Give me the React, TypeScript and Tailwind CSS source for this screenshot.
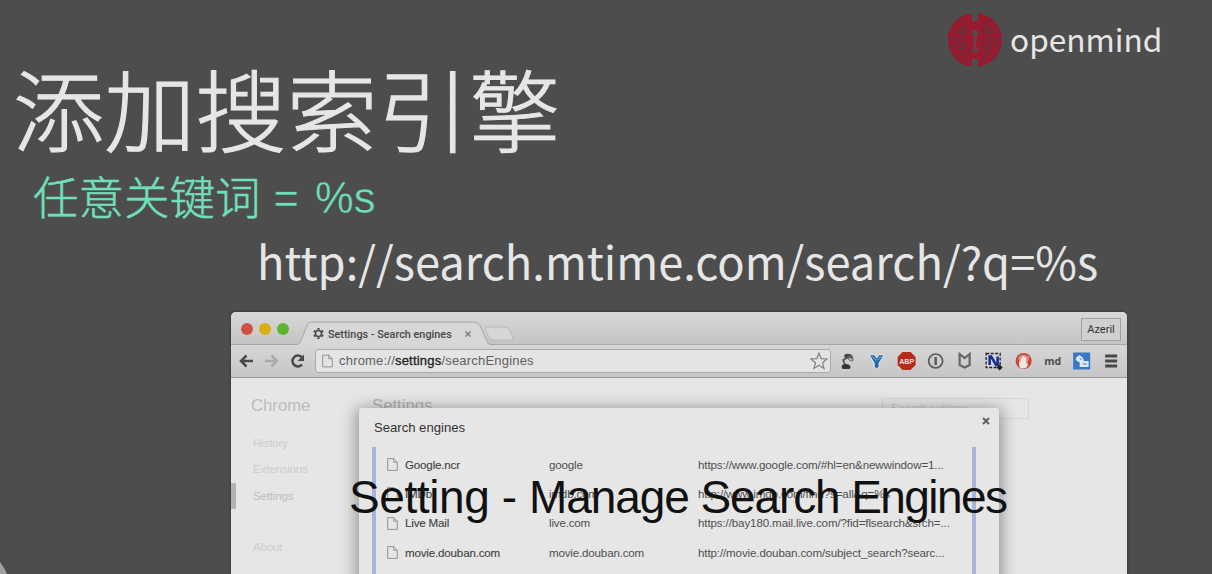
import React from "react";

const LATIN = "font-['Liberation_Sans',Arial,sans-serif]";
const CJK = "font-['Noto_Sans_CJK_SC',sans-serif]";

const engines = [
  { name: "Google.ncr", keyword: "google", url: "https://www.google.com/#hl=en&newwindow=1..." },
  { name: "IMDb", keyword: "imdb.com", url: "http://www.imdb.com/find?s=all&q=%s" },
  { name: "Live Mail", keyword: "live.com", url: "https://bay180.mail.live.com/?fid=flsearch&srch=..." },
  { name: "movie.douban.com", keyword: "movie.douban.com", url: "http://movie.douban.com/subject_search?searc..." },
];

function Brain() {
  return (
    <svg className="h-[54px] w-[54px] shrink-0" viewBox="0 0 54 54" fill="none">
      <path d="M24 .5C10 2 0 13 0 27s10 25 24 26.500V46h6v7.500C44 52 54 41 54 27S44 2 30 .5V8h-6z" fill="#971a2e" />
      <g stroke="#5f3340" strokeWidth="1.300" strokeLinecap="round">
        {[false, true].map((flip) => (
          <g key={String(flip)} transform={flip ? "translate(54 0) scale(-1 1)" : undefined}>
            <path d="M6 13c1 6 4 8 7 7 4-1 4-7 0-6-2 0-2 3 0 3M1 26h16M13 9c4 0 5 4 5 8 0 3-2 5-5 5" />
            <path d="M3 38c0-6 3-9 8-9 6 0 6 7 2 7-3 0-3-4 0-4M8 46c0-4 3-6 7-6 4-1 5-5 3-9M16 44c2 1 3 3 4 5" />
          </g>
        ))}
      </g>
      <circle cx="27" cy="20" r="3.200" fill="#574a4d" />
      <path d="M25 24h4l-1 8 2 6h-6l2-6z" fill="#6b3f48" />
      <path d="M23.500 38.500h7" stroke="#55484b" strokeWidth="2" />
    </svg>
  );
}

function FileIcon({ className }: { className: string }) {
  return (
    <svg className={className} viewBox="0 0 11 13" fill="none" stroke="#929292">
      <path d="M.7.600h6l3.600 3.600v8.200H.7zM6.700.600v3.600h3.600" />
    </svg>
  );
}

function ToolIcon({ children }: { children: React.ReactNode }) {
  return (
    <svg className="h-5 w-[29.300px] shrink-0" viewBox="-14.650 -10 29.300 20" fill="none">
      {children}
    </svg>
  );
}

function TabStrip() {
  return (
    <div className="relative flex h-[33px] items-start rounded-t-[5px] bg-linear-to-b from-[#d8d8d8] to-[#c4c4c4]">
      <svg className="absolute left-0 top-0 h-[33px] w-[896px]" viewBox="0 0 896 33" fill="none">
        <path d="M66 33q3-1 4-4l6-15q1-3.500 5-3.500h162q4 0 6 3.500l7 16q1 3 4 3z" fill="#d7d7d7" />
        <path d="M0 32.500h66q3-1 4-4l6-15q1-3.500 5-3.500h162q4 0 6 3.500l7 16q1 3 4 3h636" stroke="#a8a8a8" />
        <path d="M255 15h19q3 0 4 2l4 9q0 2-2 2h-18q-3 0-4-3l-4-8q0-2 1-2z" fill="#d6d6d6" stroke="#b9b9b9" />
      </svg>
      <div className="relative ml-[10px] mt-[11px] flex gap-[6px]">
        <span className="size-3 rounded-full bg-[#cf5145]" />
        <span className="size-3 rounded-full bg-[#dbae12]" />
        <span className="size-3 rounded-full bg-[#5cb632]" />
      </div>
      <svg className="relative ml-[24px] mt-[16px] size-[11px]" viewBox="-6 -6 12 12" fill="none" stroke="#505050">
        <circle r="3.300" strokeWidth="1.800" />
        <path d="M0-5.900V-4M0 5.900V4M-5-2.900l1.500.9M5 2.900 3.500 2M5-2.900 3.500-2M-5 2.900l1.500-.9" strokeWidth="2.600" />
      </svg>
      <span className="relative ml-[4px] mt-[15px] w-[137px] whitespace-nowrap font-['Roboto',sans-serif] text-[10.850px] font-medium leading-[16px] text-[#484848]">
        Settings - Search engines
      </span>
      <svg className="relative mt-[19px] size-[6px]" viewBox="0 0 6 6" stroke="#777" strokeWidth="1.300">
        <path d="m.500.500 5 5m0-5-5 5" />
      </svg>
      <div className="ml-auto mr-[6px] mt-[6px] flex h-[23px] w-[40px] items-center justify-center border border-[#a0a0a0] bg-[#d0d0d0] pt-px font-['Roboto',sans-serif] text-[11px] text-[#333]">
        Azeril
      </div>
    </div>
  );
}

function Toolbar() {
  return (
    <div className="flex h-[33px] items-center border-b border-[#989898] bg-linear-to-b from-[#d6d6d6] to-[#c6c6c6]">
      <svg className="ml-[8px] h-[18px] w-[70px] shrink-0" viewBox="0 0 70 18" fill="none" strokeWidth="2.500">
        <path d="M14 9H2m5.500-5.500L2 9l5.500 5.500" stroke="#494949" />
        <path d="M26 9h12m-5.500-5.500L38 9l-5.500 5.500" stroke="#aaa" />
        <path d="M63 12.500a5.400 5.400 0 1 1-.3-7.300" stroke="#494949" strokeWidth="2.500" />
        <path d="M65 2.500v6.500h-6.500z" fill="#494949" />
      </svg>
      <div className="ml-[6px] flex h-[24px] w-[516px] items-center rounded-[3px] border border-[#aaa] bg-[#e4e4e4]">
        <FileIcon className="ml-[6px] h-[14px] w-[11px]" />
        <span className="ml-[6px] whitespace-nowrap text-[13px] leading-4 tracking-[.2px] text-[#606060]">
          chrome://<span className="text-[#1d1d1d] [-webkit-text-stroke:.3px_#1d1d1d]">settings</span>/searchEngines
        </span>
        <svg className="ml-auto mr-[2px] size-[18px]" viewBox="0 0 18 18" fill="none" stroke="#808080">
          <path d="m9 1.200 2.200 5.400 5.800.4-4.500 3.700 1.500 5.700L9 13.300l-5 3.100 1.500-5.700L1 7l5.800-.4z" strokeWidth="1.200" />
        </svg>
      </div>
      <div className="ml-[2px] flex items-center">
        <ToolIcon>
          <path d="M-2.500 4-4.500-1l5-3" stroke="#505050" strokeWidth="1.700" />
          <ellipse cx="0" cy="-5" rx="3.500" ry="2.300" fill="#484848" />
          <path d="m-1-3 6 3q2-4-2-7z" fill="#606060" />
          <ellipse cx="3" cy="-1.800" rx="2.800" ry="1.300" transform="rotate(25 3 -1.800)" fill="#bdbdbd" stroke="#555" strokeWidth=".7" />
          <path d="M-6 6q0-3 4-3t5 3l-1 2h-7z" fill="#353535" />
        </ToolIcon>
        <ToolIcon>
          <path d="m-7.500-6 5-.5L0-3l3-3.500 4.500.5L2.500 2v4L0 8l-2.500-2V2z" fill="#2866a4" stroke="#e9eef2" strokeWidth="1" />
          <path d="m-5-5 4 4 3-1 3-3" stroke="#5aa3d8" strokeWidth="1.200" />
        </ToolIcon>
        <ToolIcon>
          <path d="M-4-9h8l5 5v8l-5 5h-8l-5-5v-8z" fill="#b52b1b" />
          <text textAnchor="middle" y="2.600" fill="#f2dfdc" fontFamily="Liberation Sans" fontWeight="700" fontSize="7.500" textLength="15" lengthAdjust="spacingAndGlyphs">ABP</text>
        </ToolIcon>
        <ToolIcon>
          <circle r="7" stroke="#5b5b5b" strokeWidth="1.700" />
          <path d="M0-4v8" stroke="#5b5b5b" strokeWidth="2.500" />
        </ToolIcon>
        <ToolIcon>
          <path d="M-5-7 0-3l5-4V4L0 6.500-5 4z" stroke="#666" strokeWidth="2.200" />
        </ToolIcon>
        <ToolIcon>
          <path d="M-7.500-7.500h14v14h-14z" fill="#ced2da" stroke="#222" strokeWidth="1.300" strokeDasharray="3 1.500" />
          <path d="M-4 4V-4.500h1.500L2.500 4H4v-8.500" stroke="#182c92" strokeWidth="2.500" />
          <path d="m6 3.500 3 3-3 3-3-3z" fill="#202020" />
        </ToolIcon>
        <ToolIcon>
          <circle r="8" fill="#c54735" />
          <path d="M-6-4q6-5 12 0L4 2h-8z" fill="#df8879" />
          <path d="M-4.500 0v4q0 3.500 4 3.500t5-4.500l-2-1v-6H.5v-1h-2v2h-1.500v4z" fill="#eee6e3" />
        </ToolIcon>
        <span className="w-[29.300px] text-center font-['Open_Sans',sans-serif] text-[10.500px] font-bold leading-5 text-[#4b4b4b]">md</span>
        <ToolIcon>
          <path d="M-8.500-8.500h17v17h-17z" fill="#3877ca" />
          <circle cx="-2" cy="-2" r="3" fill="#dce9f7" />
          <path d="m-5-4 3-2 4 4v2h5v6h-9V1l-4-2z" fill="#dce9f7" />
          <path d="m-2-3 2 2M1 3h4" stroke="#3877ca" />
        </ToolIcon>
        <ToolIcon>
          <path d="M-6.500-5h12M-6.500 0h12M-6.500 5h12" stroke="#484848" strokeWidth="2.800" />
        </ToolIcon>
      </div>
    </div>
  );
}

function EngineDialog() {
  return (
    <div className="absolute left-[128px] top-[30px] h-[230px] w-[640px] rounded-[3px] bg-[#e6e6e6] shadow-[0_3px_16px_3px_rgba(0,0,0,.36)]">
      <div className="flex h-[39px] items-start justify-between pl-[15px] pr-[9px] pt-[12px]">
        <h2 className="text-[13.100px] leading-4 text-[#333]">Search engines</h2>
        <svg className="mt-[-3px] size-[8px]" viewBox="0 0 8 8" stroke="#606060" strokeWidth="2">
          <path d="m1 1 6 6m0-6L1 7" />
        </svg>
      </div>
      <div className="ml-[13px] mr-[23px] h-[191px] border-x-[4px] border-[#a5b4d8] pt-[3px]">
        {engines.map((engine) => (
          <div key={engine.name} className="flex h-[29.300px] items-center whitespace-nowrap text-[11.600px] leading-4">
            <FileIcon className="ml-[11px] h-[13px] w-[11px]" />
            <span className="ml-[7px] w-[144px] tracking-[-.18px] text-[#404040] [-webkit-text-stroke:.1px_#404040]">{engine.name}</span>
            <span className="w-[149px] tracking-[-.18px] text-[#505050]">{engine.keyword}</span>
            <span className="tracking-[-.13px] text-[#505050]">{engine.url}</span>
          </div>
        ))}
      </div>
    </div>
  );
}

function BrowserWindow() {
  return (
    <section className={`${LATIN} ml-[231px] h-[300px] w-[896px] shrink-0 rounded-t-[5px] bg-[#e6e6e6] shadow-[0_0_3px_rgba(0,0,0,.4)]`}>
      <TabStrip />
      <Toolbar />
      <div className="relative flex h-[234px]">
        <nav className="w-[141px] text-[11.600px] leading-4 tracking-[-.2px] text-[#cdcdcd]">
          <div className="pl-[20px] pt-[17px] text-[16.700px] leading-[22px] tracking-normal text-[#bdbdbd]">Chrome</div>
          <div className="mt-[18px] pl-[22px]">History</div>
          <div className="mt-[10px] pl-[22px]">Extensions</div>
          <div className="mt-[6px] flex h-[26px] items-center border-l-[5px] border-[#b3b3b3] pl-[17px] text-[#bdbdbd]">Settings</div>
          <div className="mt-[30px] pl-[22px]">About</div>
        </nav>
        <div className="flex grow items-start justify-between pr-[98px]">
          <h1 className="pt-[17px] text-[16.700px] leading-[22px] text-[#b4b4b4]">Settings</h1>
          <div className="mt-[20px] h-[21px] w-[147px] border border-[#d8d8d8] pl-[8px] text-[11.200px] leading-[19px] text-[#cacaca]">Search settings</div>
        </div>
        <EngineDialog />
      </div>
    </section>
  );
}

export default function App() {
  return (
    <main className="relative flex h-[574px] w-[1212px] flex-col overflow-hidden bg-[#4d4d4d] text-[#e6e6e6]">
      <header className="flex h-[226px] shrink-0 justify-between">
        <div>
          <h1 className={`${CJK} ml-[13px] mt-[54px] origin-center scale-y-[.975] whitespace-nowrap text-[91.200px] font-light leading-[104px] [-webkit-text-stroke:1.200px_#e6e6e6]`}>添加搜索引擎</h1>
          <p className={`${CJK} ml-[33px] mt-[7px] flex whitespace-pre text-[45.500px] font-light leading-[60px] text-[#6fdfb9] [-webkit-text-stroke:.5px_#6fdfb9]`}>
            任意关键词
            <span className={`${LATIN} ml-[13px] pt-[3px] text-[43.500px] [word-spacing:4px] [-webkit-text-stroke:.4px_#4d4d4d]`}>= %s</span>
          </p>
        </div>
        <div className="mr-[50px] mt-[13px] flex h-[54px] gap-[8px]">
          <Brain />
          <span className={`${CJK} w-[152px] whitespace-nowrap text-[31.600px] leading-[50px]`}>openmind</span>
        </div>
      </header>
      <p className={`${CJK} ml-[257px] h-[86px] shrink-0 whitespace-nowrap text-[45.250px] leading-[70px]`}>
        http://search.mtime.com/search/?q=%s
      </p>
      <BrowserWindow />
      <p className={`${LATIN} absolute left-[349px] top-[470px] whitespace-nowrap text-[46px] leading-[54px] tracking-[-1.100px] text-[#111]`}>
        <span className="tracking-[-.400px]">Setting - </span>Manage Search <span className="tracking-[-1.600px]">Engines</span>
      </p>
      <svg className="absolute bottom-0 left-0 h-[13px] w-[8px]" viewBox="0 0 8 13">
        <path d="M0 1q4 5 7 12H0z" fill="#a0a0a0" />
      </svg>
    </main>
  );
}
